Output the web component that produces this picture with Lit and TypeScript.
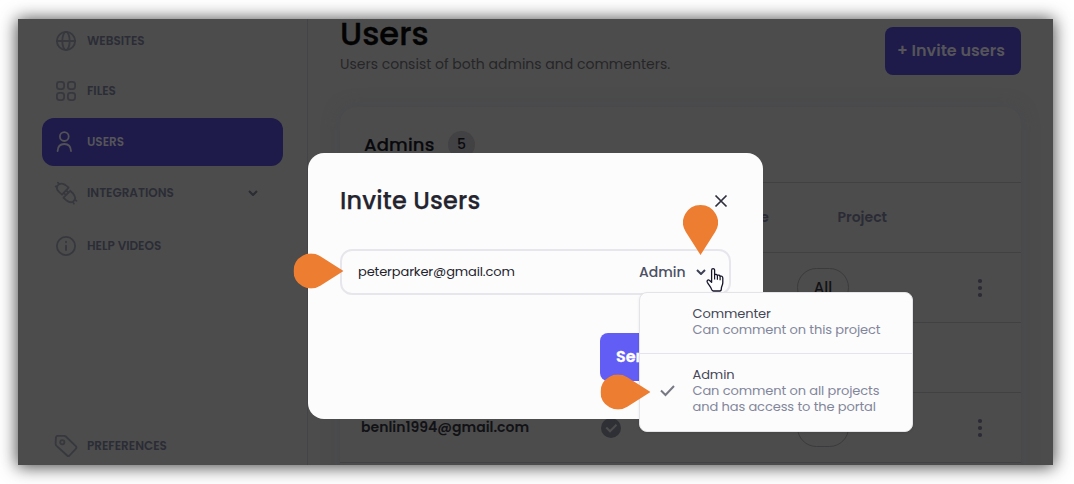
import { LitElement, html, css, svg } from "lit";
import { customElement, property } from "lit/decorators.js";

const glyphs: Record<string, unknown> = {
  globe: svg`<circle cx="12" cy="12" r="9.1"/><ellipse cx="12" cy="12" rx="3.7" ry="9.1"/><path d="M3 12h18"/>`,
  grid: svg`<rect x="2.900" y="2.900" width="7.200" height="7.200" rx="2.500"/><rect x="13.900" y="2.900" width="7.200" height="7.200" rx="2.500"/><rect x="2.900" y="13.900" width="7.200" height="7.200" rx="2.500"/><rect x="13.900" y="13.900" width="7.200" height="7.200" rx="2.500"/>`,
  user: svg`<circle cx="10.300" cy="6.600" r="4.400"/><path d="M3.600 21c.2-4.600 2.800-7 6.700-7s6.500 2.400 6.700 7"/>`,
  plug: svg`<path d="M1.700 5.400 3.200 6.100M3.900 1.700 5.200 3.100M5.200 3.100C8 1.900 10.200 2.400 14.600 6.700L8 13.600C3.200 9.800 1.600 7 3.200 4.900L5.200 3.100M9.500 16.600 16.200 9.800M12 14.100 10.100 12.300M14.400 11.600 12.500 9.700M16.200 9.800c4.500 3.900 5.900 6.300 4.600 8.900l-1.900 2.100c-2.900 1.400-5.400.2-9.400-4.200M20.900 18.900l1.600.8M18.900 20.800l1 1.900"/>`,
  info: svg`<circle cx="12" cy="12" r="9.100"/><path d="M12 11.700v4.300M12 7.800v.500" stroke-width="1.900"/>`,
  tag: svg`<path d="M3.700 1.800h6.300c.8 0 1.300.2 1.800.7l10 9.700c.9.900.9 1.700 0 2.600l-6.300 6.700c-.8.800-1.600.8-2.400 0L2.600 11.800c-.7-.7-1-1.200-1-2.100l.3-6.100c.1-1.200.6-1.800 1.800-1.800z"/><circle cx="8.300" cy="8.300" r="2.100"/>`,
};

@customElement("nav-item")
export class NavItem extends LitElement {
  @property() icon = "globe";
  @property() label = "";
  @property({ type: Boolean, reflect: true }) active = false;
  @property({ type: Boolean }) expandable = false;

  static styles = css`
    :host {
      display: flex;
      align-items: center;
      box-sizing: border-box;
      width: 241px;
      height: 48px;
      flex: none;
      padding: 0 25px 0 12px;
      border-radius: 12px;
      color: #2b2c36;
    }
    :host([active]) { background: #1e1b4a; color: #555459; }
    .icon { width: 24px; height: 24px; flex: none; overflow: visible; fill: none; stroke: #37383e; stroke-width: 1.8; stroke-linecap: round; stroke-linejoin: round; }
    :host([active]) .icon { stroke: #525157; }
    .label { margin-left: 9px; flex: 1; font-size: 12px; font-weight: 600; white-space: nowrap; }
    .chevron { width: 10px; height: 6px; fill: none; stroke: #2b2c34; stroke-width: 2; }
  `;

  render() {
    return html`
      <svg class="icon" viewBox="0 0 24 24">${glyphs[this.icon]}</svg>
      <span class="label">${this.label}</span>
      ${this.expandable ? html`<svg class="chevron" viewBox="0 0 10 6"><path d="M1 1l4 4 4-4"/></svg>` : null}
    `;
  }
}

@customElement("app-root")
export class AppRoot extends LitElement {
  static styles = css`
    * { box-sizing: border-box; }
    :host {
      display: block;
      position: relative;
      width: 1074px;
      height: 484px;
      overflow: hidden;
      padding: 19px 21px 19px 18px;
      box-sizing: border-box;
      background: #fff;
      font-family: Poppins, Inter, sans-serif;
      white-space: nowrap;
    }
    .window {
      display: flex;
      width: 1035px;
      height: 446px;
      background: #4c4c4c;
      box-shadow: 0 1px 16px 1px rgba(0, 0, 0, 0.72);
    }
    .clip { display: flex; width: 100%; height: 100%; overflow: hidden; }
    .sidebar { display: flex; flex-direction: column; width: 290px; flex: none; padding-left: 24px; border-right: 1px solid #444446; }
    .sidebar nav { display: flex; flex-direction: column; margin-top: -2px; }
    .sidebar nav :nth-child(2) { margin-top: 2px; }
    .sidebar nav :nth-child(3) { margin-top: 3px; }
    .sidebar nav :nth-child(4) { margin-top: 3px; }
    .sidebar nav :nth-child(5) { margin-top: 5px; }
    .sidebar .foot { margin-top: 152px; }

    .main { flex: 1; padding: 0 32px; }
    .head { display: flex; justify-content: space-between; height: 88px; }
    h1 { margin: 0; height: 34px; line-height: 30px; font-size: 32px; font-weight: 500; color: #030303; letter-spacing: 0.1px; -webkit-text-stroke: 0.4px #030303; }
    .sub { margin: 0; line-height: 22px; font-size: 14px; color: #262628; }
    .invite { margin-top: 8px; width: 136px; height: 48px; border-radius: 8px; background: #1e1b4a; color: #55545a; font-size: 16px; font-weight: 600; line-height: 47px; padding-left: 12px; }
    .card { height: 400px; border-radius: 16px; background: #4c4c4c; box-shadow: 0 0 16px 2px rgba(66, 70, 80, 0.35); }
    .card-head { display: flex; align-items: center; height: 76px; padding-left: 24px; border-bottom: 1px solid #414144; }
    .card-title { width: 84px; font-size: 18px; font-weight: 500; letter-spacing: 0.15px; color: #09090d; -webkit-text-stroke: 0.2px #09090d; }
    .badge { width: 27px; height: 27px; border-radius: 50%; background: #424244; color: #09090d; font-size: 14px; font-weight: 500; line-height: 27px; text-align: center; }
    .row { display: grid; grid-template-columns: 239px 149px 69px 136px 88px; align-items: center; height: 70px; border-bottom: 1px solid #414144; }
    .email { padding-left: 21px; font-size: 14px; font-weight: 600; color: #121216; }
    .th { font-size: 14px; font-weight: 600; color: #2a2b35; }
    .th.role { text-align: right; padding-right: 28px; grid-column: 2 / 4; }
    .th.project { padding-left: 40.500px; }
    .check { width: 20px; height: 20px; margin-left: 22px; display: block; }
    .pill { grid-column: 4; width: 52px; height: 39px; border: 1px solid #3b3b3e; border-radius: 20px; color: #121216; font-size: 15px; font-weight: 500; text-align: center; line-height: 37px; }
    .more { grid-column: 5; width: 4px; height: 18px; margin-left: 45px; display: block; fill: #2b2b36; overflow: visible; }

    .modal { position: absolute; left: 308px; top: 153px; width: 455px; height: 266px; padding: 32px; border-radius: 16px; background: #fcfcfc; display: flex; flex-direction: column; }
    .modal-head { display: flex; justify-content: space-between; align-items: center; height: 32px; padding-right: 4px; }
    h2 { margin: 0; font-size: 24px; line-height: 32px; font-weight: 500; letter-spacing: 0.18px; color: #24242f; -webkit-text-stroke: 0.25px #24242f; }
    .close { width: 12px; height: 12px; stroke: #2d2f3d; stroke-width: 1.7; overflow: visible; }
    .field { display: flex; align-items: center; height: 46px; margin-top: 32px; padding: 0 19px 0 16px; border: 2px solid #e6e6ec; border-radius: 12px; }
    .value { flex: 1; font-size: 13px; letter-spacing: -0.13px; color: #24242f; }
    .role-pick { font-size: 14px; font-weight: 500; color: #4b5064; width: 57px; }
    .field .chevron { width: 10px; height: 6px; margin-right: 4px; fill: none; stroke: #3c4156; stroke-width: 2; }
    .send { align-self: flex-end; margin-top: 38px; width: 131px; height: 48px; padding-left: 16px; border-radius: 8px; background: #625df5; color: #fff; font-size: 16px; line-height: 47px; font-weight: 600; -webkit-text-stroke: 0.3px #fff; }

    .menu { position: absolute; left: 639px; top: 292px; width: 274px; height: 140px; border: 1px solid #e4e4e8; border-radius: 8px; background: #fcfcfc; box-shadow: 0 1px 3px rgba(0, 0, 0, 0.08); }
    .option { display: grid; grid-template-columns: 52.500px 1fr; align-items: center; height: 60px; font-size: 13px; line-height: 16px; letter-spacing: -0.1px; color: #454756; }
    .option.last { height: 78px; border-top: 1px solid #e4e4ea; }
    .option p { margin: 0; }
    .option .hint { color: #82869b; }
    .tick { width: 15px; height: 11px; margin: -4px 0 0 20px; fill: none; stroke: #777984; stroke-width: 2; overflow: visible; }
    .option .copy { margin-top: -2px; }
    .option.last .copy { margin-top: -4px; }

    .marker { position: absolute; width: 35px; height: 50px; fill: #ed7d31; }
    .m1 { left: 300.500px; top: 245.500px; transform: rotate(-90deg); }
    .m2 { left: 683px; top: 205px; }
    .m3 { left: 608px; top: 366.500px; transform: rotate(-90deg); }
    .cursor { position: absolute; left: 706px; top: 268px; width: 19px; height: 25px; overflow: visible; }
  `;

  private marker(cls: string) {
    return html`<svg class="marker ${cls}" viewBox="0 0 35 50"><path d="M17.500 0A17.500 17.500 0 0 1 32.300 26.800L17.500 50 2.700 26.800A17.500 17.500 0 0 1 17.500 0z"/></svg>`;
  }

  private more() {
    return html`<svg class="more" viewBox="0 0 4 18"><circle cx="2" cy="2" r="2.100"/><circle cx="2" cy="9" r="2.100"/><circle cx="2" cy="16" r="2.100"/></svg>`;
  }

  render() {
    return html`
      <div class="window"><div class="clip">
        <aside class="sidebar">
          <nav>
            <nav-item icon="globe" label="WEBSITES"></nav-item>
            <nav-item icon="grid" label="FILES"></nav-item>
            <nav-item icon="user" label="USERS" active></nav-item>
            <nav-item icon="plug" label="INTEGRATIONS" expandable></nav-item>
            <nav-item icon="info" label="HELP VIDEOS"></nav-item>
          </nav>
          <nav-item class="foot" icon="tag" label="PREFERENCES"></nav-item>
        </aside>
        <section class="main">
          <header class="head">
            <div>
              <h1>Users</h1>
              <p class="sub">Users consist of both admins and commenters.</p>
            </div>
            <div class="invite">+ Invite users</div>
          </header>
          <div class="card">
            <div class="card-head"><span class="card-title">Admins</span><span class="badge">5</span></div>
            <div class="row"><span></span><span class="th role">Role</span><span class="th project">Project</span></div>
            <div class="row"><span class="pill">All</span>${this.more()}</div>
            <div class="row"></div>
            <div class="row">
              <span class="email">benlin1994@gmail.com</span>
              <svg class="check" viewBox="0 0 20 20"><circle cx="10" cy="10" r="10" fill="#2f3036"/><path d="M5.300 9.500l3.700 3.800 6.500-6.500" fill="none" stroke="#4c4c4c" stroke-width="2"/></svg>
              <span class="pill"></span>${this.more()}
            </div>
          </div>
        </section>
      </div></div>

      <div class="modal">
        <div class="modal-head">
          <h2>Invite Users</h2>
          <svg class="close" viewBox="0 0 12 12"><path d="M.5.5l11 11M11.500.5l-11 11"/></svg>
        </div>
        <div class="field">
          <span class="value">peterparker@gmail.com</span>
          <span class="role-pick">Admin</span>
          <svg class="chevron" viewBox="0 0 10 6"><path d="M1 1l4 4 4-4"/></svg>
        </div>
        <div class="send">Send</div>
      </div>

      <div class="menu">
        <div class="option"><span></span><div class="copy"><p>Commenter</p><p class="hint">Can comment on this project</p></div></div>
        <div class="option last">
          <svg class="tick" viewBox="0 0 15 11"><path d="M1 5.500l4.500 4.500L14 1"/></svg>
          <div class="copy"><p>Admin</p><p class="hint">Can comment on all projects</p><p class="hint">and has access to the portal</p></div>
        </div>
      </div>

      ${this.marker("m1")}${this.marker("m2")}${this.marker("m3")}
      <svg class="cursor" viewBox="0 0 19 25"><path d="M5.600 14.200V2.200c0-2.100 3-2.100 3 0v4.700c.6-.9 2.500-.7 2.800.6.8-.7 2.400-.4 2.700.8 1.100-.6 2.700 0 2.700 1.600v4.600c0 3-1.500 3.600-1.500 6.500 0 1.300-.5 2-1.600 2H7.400c-1.200 0-1.500-.6-1.800-1.600-.6-2.300-2.900-4.400-4.300-7.100-.9-1.900.8-3.100 2.300-1.900z" fill="#fff" stroke="#15152a" stroke-width="1.300" stroke-linejoin="round"/><path d="M8.600 6.500v5M11.400 7.500v4.300M14.100 8.300v4" fill="none" stroke="#15152a" stroke-width="1.200"/></svg>
    `;
  }
}
